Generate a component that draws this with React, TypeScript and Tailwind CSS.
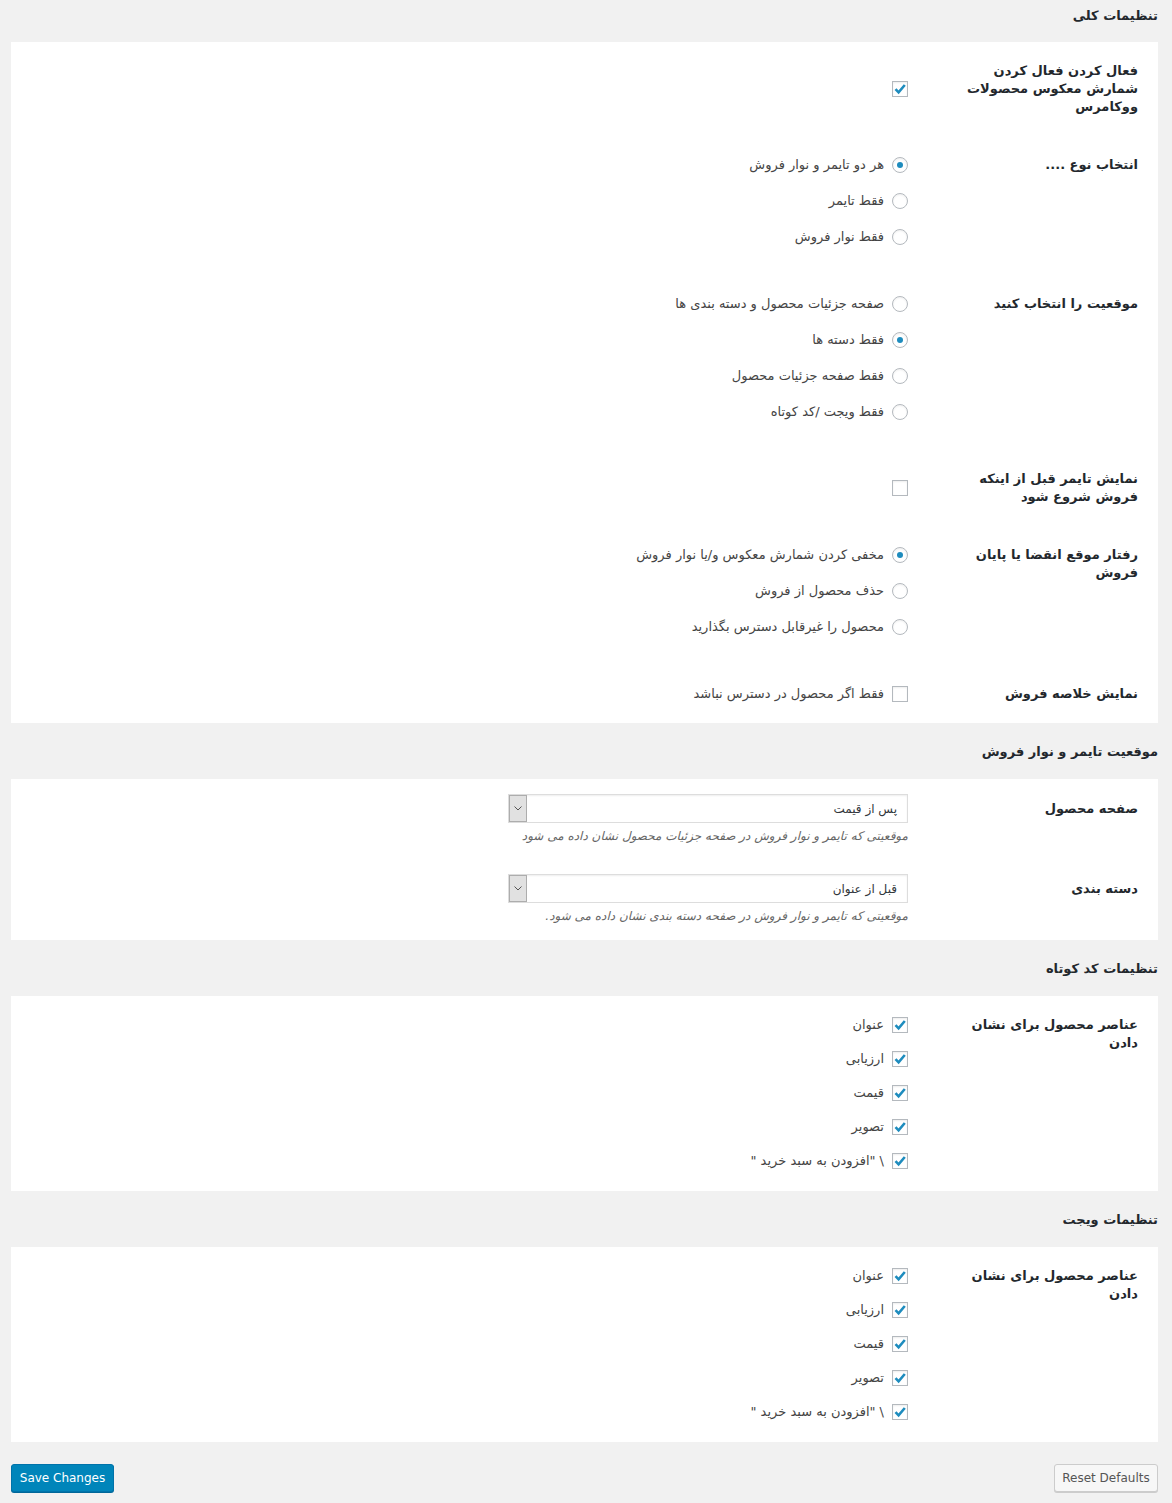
import { ReactNode } from 'react';

const FONT = "font-['DejaVu_Sans',sans-serif]";

const CheckBox = ({ checked }: { checked?: boolean }) => (
	<span className="w-4 h-4 shrink-0 border border-[#b4b9be] bg-white shadow-[inset_0_1px_2px_rgba(0,0,0,0.07)] flex items-center justify-center">
		{checked && (
			<svg width="14" height="14" viewBox="0 0 14 14">
				<path d="M2.5 7.2 L5.6 10.4 L11.8 3" fill="none" stroke="#1e8cbe" strokeWidth="2.6" />
			</svg>
		)}
	</span>
);

const Radio = ({ checked }: { checked?: boolean }) => (
	<span className="w-4 h-4 shrink-0 rounded-full border border-[#b4b9be] bg-white shadow-[inset_0_1px_2px_rgba(0,0,0,0.07)] flex items-center justify-center">
		{checked && <span className="w-[6px] h-[6px] rounded-full bg-[#1e8cbe]" />}
	</span>
);

const Label = ({ lines }: { lines: string[] }) => (
	<div className="w-[230px] shrink-0 pl-[30px] text-[13px] font-bold leading-[18px] text-[#23282d]">
		{lines.map((l) => (
			<div key={l} className="whitespace-nowrap">
				{l}
			</div>
		))}
	</div>
);

const Option = ({ control, text }: { control: ReactNode; text: string }) => (
	<div className="flex items-center gap-[8px] h-[18px] text-[13px] text-[#444]">
		{control}
		<span className="whitespace-nowrap">{text}</span>
	</div>
);

const Title = ({ text, first }: { text: string; first?: boolean }) => (
	<h2
		className={`${first ? 'pt-[6px] pb-[16px]' : 'pt-[19px] pb-[17px]'} leading-[20px] text-[13px] font-semibold text-[#23282d]`}
	>
		{text}
	</h2>
);

const Panel = ({ children, className = '' }: { children: ReactNode; className?: string }) => (
	<div className={`bg-white pr-[20px] ${className}`}>{children}</div>
);

const RadioRow = ({ label, options, selected }: { label: string[]; options: string[]; selected: number }) => (
	<div className="flex py-[20px]">
		<Label lines={label} />
		<div className="flex flex-col gap-[18px] pb-[9px]">
			{options.map((o, i) => (
				<Option key={o} control={<Radio checked={i === selected} />} text={o} />
			))}
		</div>
	</div>
);

const CheckRow = ({ label, text, checked }: { label: string[]; text?: string; checked?: boolean }) => (
	<div className="flex items-center py-[20px]">
		<Label lines={label} />
		<Option control={<CheckBox checked={checked} />} text={text ?? ''} />
	</div>
);

const SelectRow = ({ label, value, help }: { label: string; value: string; help: string }) => (
	<div className="flex py-[15px] last:pb-[16px]">
		<div className="w-[230px] shrink-0 h-[29px] flex items-center text-[13px] font-bold text-[#23282d]">{label}</div>
		<div className="w-[400px]">
			<div className="h-[29px] border border-[#ddd] bg-white flex items-stretch shadow-[inset_0_1px_2px_rgba(0,0,0,0.07)]">
				<span className="flex-1 flex items-center pr-[10px] text-[12px] text-[#32373c]">{value}</span>
				<span className="w-[18px] bg-[#e1e1e1] border border-[#adadad] flex items-center justify-center">
					<svg width="8" height="5" viewBox="0 0 8 5">
						<path d="M0.5 0.5 L4 4 L7.5 0.5" fill="none" stroke="#555" strokeWidth="1" />
					</svg>
				</span>
			</div>
			<p className="mt-[6px] text-[12px] leading-[15px] italic text-[#666] whitespace-nowrap">{help}</p>
		</div>
	</div>
);

const elements = ['عنوان', 'ارزیابی', 'قیمت', 'تصویر', '\\ "افزودن به سبد خرید "'];

const ElementsPanel = () => (
	<Panel className="pt-[20px] pb-[21px]">
		<div className="flex">
			<Label lines={['عناصر محصول برای نشان', 'دادن']} />
			<div className="flex flex-col gap-[16px]">
				{elements.map((e) => (
					<Option key={e} control={<CheckBox checked />} text={e} />
				))}
			</div>
		</div>
	</Panel>
);

export default function App() {
	return (
		<div dir="rtl" className={`${FONT} bg-[#f1f1f1] min-h-[1503px] pr-[14px] pl-[11px]`}>
			<Title text="تنظیمات کلی" first />
			<Panel>
				<CheckRow label={['فعال کردن فعال کردن', 'شمارش معکوس محصولات', 'ووکامرس']} checked />
				<RadioRow
					label={['انتخاب نوع ....']}
					options={['هر دو تایمر و نوار فروش', 'فقط تایمر', 'فقط نوار فروش']}
					selected={0}
				/>
				<RadioRow
					label={['موقعیت را انتخاب کنید']}
					options={['صفحه جزئیات محصول و دسته بندی ها', 'فقط دسته ها', 'فقط صفحه جزئیات محصول', 'فقط ویجت /کد کوتاه']}
					selected={1}
				/>
				<CheckRow label={['نمایش تایمر قبل از اینکه', 'فروش شروع شود']} />
				<RadioRow
					label={['رفتار موقع انقضا یا پایان', 'فروش']}
					options={['مخفی کردن شمارش معکوس و/یا نوار فروش', 'حذف محصول از فروش', 'محصول را غیرقابل دسترس بگذارید']}
					selected={0}
				/>
				<div className="flex items-center pt-[20px] pb-[20px]">
					<Label lines={['نمایش خلاصه فروش']} />
					<Option control={<CheckBox />} text="فقط اگر محصول در دسترس نباشد" />
				</div>
			</Panel>

			<Title text="موقعیت تایمر و نوار فروش" />
			<Panel>
				<SelectRow label="صفحه محصول" value="پس از قیمت" help="موقعیتی که تایمر و نوار فروش در صفحه جزئیات محصول نشان داده می شود" />
				<SelectRow label="دسته بندی" value="قبل از عنوان" help="موقعیتی که تایمر و نوار فروش در صفحه دسته بندی نشان داده می شود." />
			</Panel>

			<Title text="تنظیمات کد کوتاه" />
			<ElementsPanel />

			<Title text="تنظیمات ویجت" />
			<ElementsPanel />

			<div dir="ltr" className="flex justify-between pt-[22px]">
				<button className="w-[103px] h-[28px] rounded-[3px] bg-[#0085ba] border border-[#0073aa] shadow-[0_1px_0_#006799] text-white text-[12px] leading-[26px]">
					Save Changes
				</button>
				<button className="w-[104px] h-[28px] rounded-[3px] bg-[#f7f7f7] border border-[#ccc] shadow-[0_1px_0_#ccc] text-[#555] text-[12px] leading-[26px]">
					Reset Defaults
				</button>
			</div>
		</div>
	);
}
